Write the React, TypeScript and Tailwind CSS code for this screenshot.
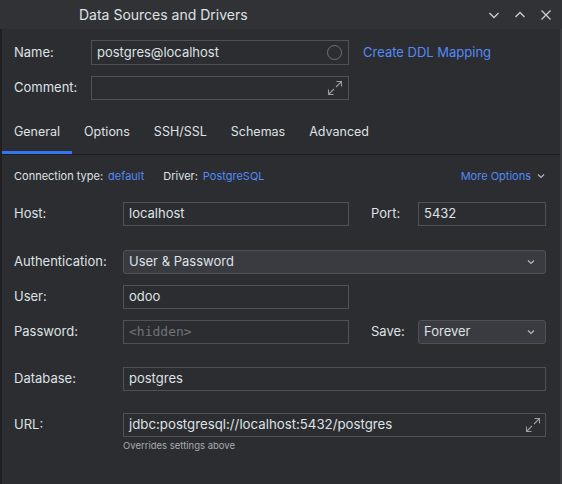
import React from 'react'

const ExpandIcon = () => (
  <svg className="w-[16px] h-[16px]" viewBox="0 0 16 16" fill="none" stroke="#9a9da3" strokeWidth={1.1}>
    <path d="M9.5 1.5h5v5 M14.5 1.5L9 7 M6.5 14.5h-5v-5 M1.5 14.5L7 9" />
  </svg>
)

const Chevron = ({ className = 'w-[10px] h-[10px]' }: { className?: string }) => (
  <svg className={className} viewBox="0 0 10 10" fill="none" stroke="#b4b8bf" strokeWidth={1.2}>
    <path d="M2 3.5l3 3 3-3" />
  </svg>
)

const TextBox = ({ value, w, mono, children }: { value?: string; w: string; mono?: boolean; children?: React.ReactNode }) => (
  <div className={`${w} h-[24px] border border-[#4e5157] flex items-center pl-[5px] pr-[6px] justify-between`}>
    <span className={mono ? "font-['DejaVu_Sans_Mono',monospace] text-[13px] text-[#6f737a]" : 'text-[#dfe1e5]'}>{value}</span>
    {children}
  </div>
)

const Combo = ({ value, w }: { value: string; w: string }) => (
  <div className={`${w} h-[24px] border border-[#4e5157] rounded-[3px] bg-[#393b40] flex items-center justify-between pl-[5px] pr-[9px]`}>
    <span className="text-[#dfe1e5]">{value}</span>
    <Chevron />
  </div>
)

const tabs = ['General', 'Options', 'SSH/SSL', 'Schemas', 'Advanced']

export default function App() {
  return (
    <div className="w-[562px] h-[484px] bg-[#2b2d30] flex flex-col overflow-hidden text-[13px] text-[#dfe1e5] font-['Inter','Noto_Sans',sans-serif]">
      {/* Title bar */}
      <div className="h-[29px] shrink-0 bg-[#303236] flex items-center">
        <span className="pl-[79px] text-[14px] flex-1">Data Sources and Drivers</span>
        <div className="flex items-center gap-[12px] pr-[9px] text-[#ced0d6]">
          <svg className="w-[14px] h-[14px]" viewBox="0 0 14 14" fill="none" stroke="currentColor" strokeWidth={1.3}>
            <path d="M2.5 5l4.5 4.5L11.5 5" />
          </svg>
          <svg className="w-[14px] h-[14px]" viewBox="0 0 14 14" fill="none" stroke="currentColor" strokeWidth={1.3}>
            <path d="M2.5 9L7 4.5 11.5 9" />
          </svg>
          <svg className="w-[14px] h-[14px]" viewBox="0 0 14 14" fill="none" stroke="currentColor" strokeWidth={1.3}>
            <path d="M2.5 2.5l9 9 M11.5 2.5l-9 9" />
          </svg>
        </div>
      </div>

      {/* Body */}
      <div className="flex-1 flex flex-col border-l-2 border-[#1e1f22] border-r-2 border-r-[#393b3f]">
        {/* Name / Comment */}
        <div className="flex flex-col gap-[11px] pt-[11px] pl-[12px]">
          <div className="flex items-center">
            <span className="w-[77px]">Name:</span>
            <div className="w-[258px] h-[25px] border border-[#4e5157] flex items-center justify-between pl-[5px] pr-[6px]">
              <span>postgres@localhost</span>
              <span className="w-[15px] h-[15px] rounded-full border border-[#6f737a]" />
            </div>
            <span className="ml-[14px] text-[#548af7]">Create DDL Mapping</span>
          </div>
          <div className="flex items-center">
            <span className="w-[77px]">Comment:</span>
            <div className="w-[258px] h-[24px] border border-[#4e5157] flex items-center justify-end pr-[5px]">
              <ExpandIcon />
            </div>
          </div>
        </div>

        {/* Tabs */}
        <div className="mt-[11px] h-[44px] flex border-b border-[#1e1f22] text-[12.5px]">
          {tabs.map((t, i) => (
            <div key={t} className={`px-[12px] flex items-center ${i === 0 ? 'border-b-[3px] border-[#3574f0] pt-[3px]' : ''}`}>
              {t}
            </div>
          ))}
        </div>

        {/* Connection type */}
        <div className="h-[42px] flex items-center pl-[12px] pr-[14px] text-[11px]">
          <span>Connection type:</span>
          <span className="ml-[5px] text-[#548af7]">default</span>
          <span className="ml-[19px]">Driver:</span>
          <span className="ml-[5px] text-[#548af7]">PostgreSQL</span>
          <span className="ml-auto text-[#548af7]">More Options</span>
          <Chevron className="ml-[5px] w-[10px] h-[10px]" />
        </div>

        {/* Form */}
        <div className="flex flex-col pl-[12px] pt-[5px]">
          <div className="flex items-center">
            <span className="w-[109px]">Host:</span>
            <TextBox value="localhost" w="w-[226px]" />
            <span className="ml-[22px] w-[47px]">Port:</span>
            <TextBox value="5432" w="w-[128px]" />
          </div>
          <div className="flex items-center mt-[24px]">
            <span className="w-[109px]">Authentication:</span>
            <Combo value="User & Password" w="w-[423px]" />
          </div>
          <div className="flex items-center mt-[11px]">
            <span className="w-[109px]">User:</span>
            <TextBox value="odoo" w="w-[226px]" />
          </div>
          <div className="flex items-center mt-[11px]">
            <span className="w-[109px]">Password:</span>
            <TextBox value="<hidden>" w="w-[226px]" mono />
            <span className="ml-[22px] w-[47px]">Save:</span>
            <Combo value="Forever" w="w-[128px]" />
          </div>
          <div className="flex items-center mt-[23px]">
            <span className="w-[109px]">Database:</span>
            <TextBox value="postgres" w="w-[423px]" />
          </div>
          <div className="flex items-center mt-[22px]">
            <span className="w-[109px]">URL:</span>
            <div className="w-[423px] h-[24px] border border-[#4e5157] flex items-center justify-between pl-[5px] pr-[4px]">
              <span className="text-[13.25px]">jdbc:postgresql://localhost:5432/postgres</span>
              <ExpandIcon />
            </div>
          </div>
          <div className="pl-[109px] pt-[2px] text-[9.5px] text-[#a8abb0]">Overrides settings above</div>
        </div>
      </div>
    </div>
  )
}
